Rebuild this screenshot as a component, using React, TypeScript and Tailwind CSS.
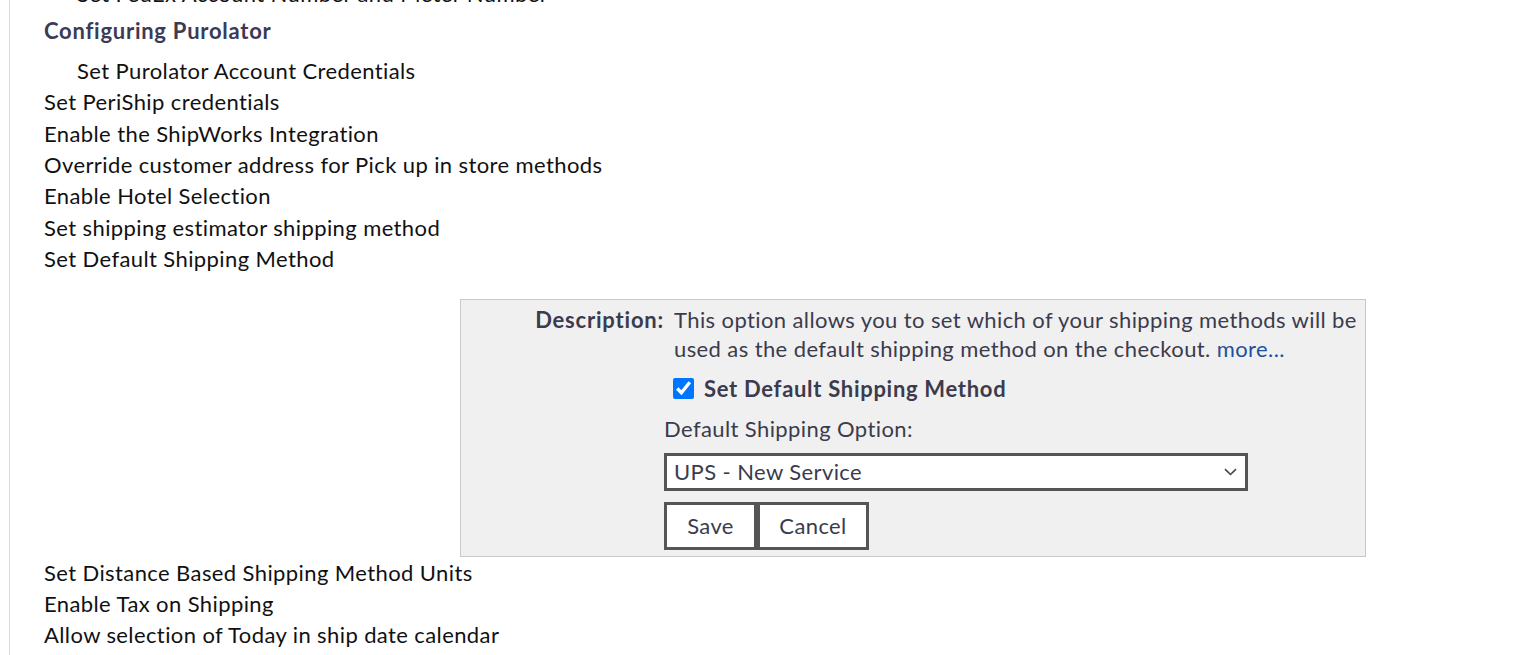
import React from "react";

const before = ["Set PeriShip credentials", "Enable the ShipWorks Integration", "Override customer address for Pick up in store methods", "Enable Hotel Selection", "Set shipping estimator shipping method", "Set Default Shipping Method"];
const after = ["Set Distance Based Shipping Method Units", "Enable Tax on Shipping", "Allow selection of Today in ship date calendar"];

function Panel() {
  return (
    <div className="ml-[416px] mt-[24px] w-[906px] border border-[#c8c8c8] bg-[#f0f0f0] pt-[5px] pb-[6px] text-[22px] leading-[29px] text-[#3b3b4d]">
      <div className="grid grid-cols-[203px_1fr]">
        <div className="text-right font-bold tracking-[0.8px]">Description:</div>
        <div className="pl-[10px]">
          This option allows you to set which of your shipping methods will be used as the default shipping method on the checkout.{" "}
          <a href="#" className="text-[#1f4f9f]">more...</a>
        </div>
        <div />
        <div>
          <label className="mt-[11px] flex items-center gap-[10px] pl-[9px] font-bold tracking-[0.7px]">
            <input type="checkbox" defaultChecked className="h-[21px] w-[21px] accent-[#0075ff]" />
            Set Default Shipping Method
          </label>
          <div className="mt-[11px]">Default Shipping Option:</div>
          <div className="relative mt-[10px] w-[584px]">
            <select className="block h-[38px] w-full appearance-none border-[3px] border-[#555] bg-white pl-[7px] text-[22px] tracking-[0.4px] text-[#3b3b4d] outline-none">
              <option>UPS - New Service</option>
            </select>
            <svg className="pointer-events-none absolute right-[11px] top-[15px]" width="13" height="8" viewBox="0 0 13 8" fill="none">
              <path d="M1 1.2l5.5 5.3L12 1.2" stroke="#444" strokeWidth="1.6" />
            </svg>
          </div>
          <div className="mt-[11px] flex">
            <button className="h-[48px] w-[93px] border-[3px] border-[#555] bg-white text-[22px] tracking-[0.4px] text-[#3b3b4d]">Save</button>
            <button className="h-[48px] w-[112px] border-[3px] border-[#555] bg-white text-[22px] tracking-[0.4px] text-[#3b3b4d]">Cancel</button>
          </div>
        </div>
      </div>
    </div>
  );
}

export default function App() {
  return (
    <div className="h-[655px] overflow-hidden bg-white font-['Lato',sans-serif] tracking-[0.4px]">
      <div className="ml-[9px] flow-root h-full border-l border-[#dcdcdc] pl-[34px] text-[22px] leading-[31.4px] text-[#111]">
        <div className="-mt-[22px] pl-[33px]">Set FedEx Account Number and Meter Number</div>
        <div className="mt-[6px] mb-[8px] font-bold tracking-[0.75px] text-[#3b3b55]">Configuring Purolator</div>
        <div className="pl-[33px]">Set Purolator Account Credentials</div>
        {before.map((t) => (
          <div key={t}>{t}</div>
        ))}
        <Panel />
        {after.map((t) => (
          <div key={t}>{t}</div>
        ))}
      </div>
    </div>
  );
}
